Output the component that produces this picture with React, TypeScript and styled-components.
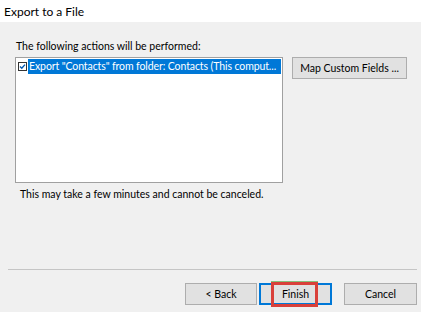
import React from 'react';
import styled, { createGlobalStyle } from 'styled-components';

const GlobalStyle = createGlobalStyle`
  html, body {
    margin: 0;
    padding: 0;
    background: #f0f0f0;
  }
  * { box-sizing: border-box; }
`;

const Window = styled.div`
  width: 421px;
  height: 312px;
  display: flex;
  flex-direction: column;
  background: #f0f0f0;
  font-family: Lato, 'Noto Sans', sans-serif;
  font-size: 10.5px;
  color: #000;
  overflow: hidden;
`;

const TitleBar = styled.div`
  height: 22px;
  background: #fff;
  padding-left: 4px;
  display: flex;
  align-items: center;
  font-size: 12px;
  color: #000;
`;

const Content = styled.div`
  padding: 17px 0 0 15px;
  display: flex;
  flex-direction: column;
`;

const Label = styled.div`
  padding-left: 1px;
  line-height: 15px;
  margin-bottom: 3px;
`;

const Row = styled.div`
  display: flex;
  align-items: flex-start;
  gap: 9px;
`;

const ListBox = styled.div`
  width: 268px;
  height: 126px;
  background: #fff;
  border: 1px solid #a0a0a0;
  padding: 1px;
`;

const ListItem = styled.div`
  display: flex;
  align-items: center;
  height: 15px;
  gap: 1px;
  padding-left: 1px;
`;

const ItemText = styled.span<{ $selected?: boolean }>`
  flex: 1;
  min-width: 0;
  height: 100%;
  line-height: 15px;
  padding-left: 1px;
  white-space: nowrap;
  overflow: hidden;
  letter-spacing: -0.1px;
  background: ${({ $selected }) => ($selected ? '#0078d7' : 'transparent')};
  color: ${({ $selected }) => ($selected ? '#fff' : '#000')};
`;

const Button = styled.button<{ $w: number; $default?: boolean }>`
  position: relative;
  width: ${({ $w }) => $w}px;
  height: 22px;
  padding: 0;
  background: #e1e1e1;
  border: 1px solid ${({ $default }) => ($default ? '#0078d7' : '#adadad')};
  box-shadow: ${({ $default }) => ($default ? 'inset 0 0 0 1px #0078d7' : 'none')};
  font-family: inherit;
  font-size: 10.5px;
  color: #000;
  white-space: nowrap;
`;

const Note = styled.div`
  margin-top: 4px;
  padding-left: 5px;
  line-height: 15px;
`;

const Spacer = styled.div`
  flex: 1;
`;

const Separator = styled.div`
  margin: 0 4px 0 8px;
  border-top: 1px solid #c5c5c5;
`;

const Footer = styled.div`
  display: flex;
  justify-content: flex-end;
  align-items: center;
  padding: 13px 4px 7px 0;
`;

const Highlight = styled.span`
  position: absolute;
  left: 11px;
  top: -2px;
  width: 47px;
  height: 25px;
  border: 3px solid #d9403a;
  pointer-events: none;

  &::before {
    content: '';
    position: absolute;
    left: -3px;
    right: -3px;
    top: -4px;
    height: 1px;
    background: #86c07c;
  }
`;

const Check = () => (
  <svg width="9" height="9" viewBox="0 0 9 9">
    <rect x="0.5" y="0.5" width="8" height="8" fill="#fff" stroke="#333" />
    <path d="M2 4.5 L3.8 6.3 L7 2.6" fill="none" stroke="#0058b0" strokeWidth="1.4" />
  </svg>
);

export default function App() {
  return (
    <>
      <GlobalStyle />
      <Window>
        <TitleBar>Export to a File</TitleBar>
        <Content>
          <Label>The following actions will be performed:</Label>
          <Row>
            <ListBox>
              <ListItem>
                <Check />
                <ItemText $selected>Export "Contacts" from folder: Contacts (This comput...</ItemText>
              </ListItem>
            </ListBox>
            <Button $w={115}>Map Custom Fields ...</Button>
          </Row>
          <Note>This may take a few minutes and cannot be canceled.</Note>
        </Content>
        <Spacer />
        <Separator />
        <Footer>
          <Button $w={72}>&lt; Back</Button>
          <Button $w={73} $default style={{ marginLeft: 2 }}>
            Finish
            <Highlight />
          </Button>
          <Button $w={73} style={{ marginLeft: 12 }}>Cancel</Button>
        </Footer>
      </Window>
    </>
  );
}
